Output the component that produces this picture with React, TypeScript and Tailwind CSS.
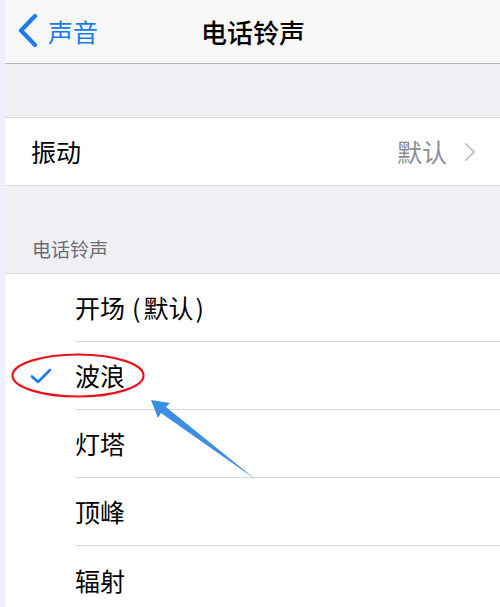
import React from "react";

const font = { fontFamily: '"Noto Sans CJK SC", "Noto Sans", sans-serif' };

const ringtones = [
    { id: 1, title: "开场", note: "默认", checked: false },
    { id: 2, title: "波浪", checked: true },
    { id: 3, title: "灯塔", checked: false },
    { id: 4, title: "顶峰", checked: false },
    { id: 5, title: "辐射", checked: false },
];

const App = () => {
    return (
        <div className="flex w-[500px] h-[607px] overflow-hidden bg-[#efeff4]" style={font}>
            <div className="w-[5px] shrink-0 bg-[#eaf0fb]" />
            <div className="relative flex flex-col flex-1">
                {/* nav bar */}
                <div className="relative flex items-center h-[64px] shrink-0 bg-[#f7f7f8] border-b border-[#b8b8bc]">
                    <div className="flex items-center pl-[12px] gap-[9px] text-[#1a7cf5]">
                        <svg width="22" height="34" viewBox="0 0 22 34" className="mt-[-1px]">
                            <path d="M18 2 L4 16.5 L18 31" fill="none" stroke="#1a7cf5" strokeWidth="4.2" strokeLinecap="round" strokeLinejoin="round" />
                        </svg>
                        <span className="text-[25px] leading-none">声音</span>
                    </div>
                    <div className="absolute left-[196px] top-0 h-full flex items-center text-[26px] font-medium text-black leading-none">
                        电话铃声
                    </div>
                </div>

                <div className="h-[54px] shrink-0 border-b border-[#d9d9dd]" />

                {/* vibration row */}
                <div className="flex items-center justify-between h-[68px] shrink-0 bg-white border-b border-[#d9d9dd] pl-[26px] pr-[24px]">
                    <span className="text-[25px] text-black leading-none">振动</span>
                    <div className="flex items-center gap-[17px]">
                        <span className="text-[25px] text-[#8e8e93] leading-none">默认</span>
                        <svg width="12" height="20" viewBox="0 0 12 20">
                            <path d="M2 2 L10 10 L2 18" fill="none" stroke="#c7c7cc" strokeWidth="2" strokeLinecap="round" strokeLinejoin="round" />
                        </svg>
                    </div>
                </div>

                {/* section header */}
                <div className="flex items-end h-[88px] shrink-0 pl-[27px] pb-[15px] border-b border-[#d9d9dd]">
                    <span className="text-[19px] text-[#6d6d72] leading-none">电话铃声</span>
                </div>

                {/* ringtone list */}
                <div className="flex flex-col bg-white flex-1">
                    {ringtones.map((item, index) => (
                        <div key={item.id} className="flex items-center h-[68px] shrink-0">
                            <div className="w-[70px] shrink-0 flex items-center pl-[25px]">
                                {item.checked && (
                                    <svg width="22" height="16" viewBox="0 0 22 16">
                                        <path d="M2 8.5 L8 14 L20 2" fill="none" stroke="#1a7cf5" strokeWidth="2.6" strokeLinecap="round" strokeLinejoin="round" />
                                    </svg>
                                )}
                            </div>
                            <div
                                className={`flex items-center flex-1 h-full ${
                                    index < ringtones.length - 1 ? "border-b border-[#d9d9dd]" : ""
                                }`}
                            >
                                <span className="text-[25px] text-black leading-none">
                                    {item.title}
                                    {item.note && (
                                        <>
                                            <span className="ml-[7px] mr-[3px]">(</span>
                                            {item.note}
                                            <span className="ml-[2px]">)</span>
                                        </>
                                    )}
                                </span>
                            </div>
                        </div>
                    ))}
                </div>

                {/* annotations */}
                <svg className="absolute left-[-5px] top-0 pointer-events-none" width="500" height="607" viewBox="0 0 500 607">
                    <ellipse cx="78" cy="375.5" rx="65.5" ry="21" fill="none" stroke="#e8141b" strokeWidth="2.2" />
                    <polygon points="151,400 170,403 166,407 255,479 161,413 158,418" fill="#3a8fe2" />
                </svg>
            </div>
        </div>
    );
};

export default App;
